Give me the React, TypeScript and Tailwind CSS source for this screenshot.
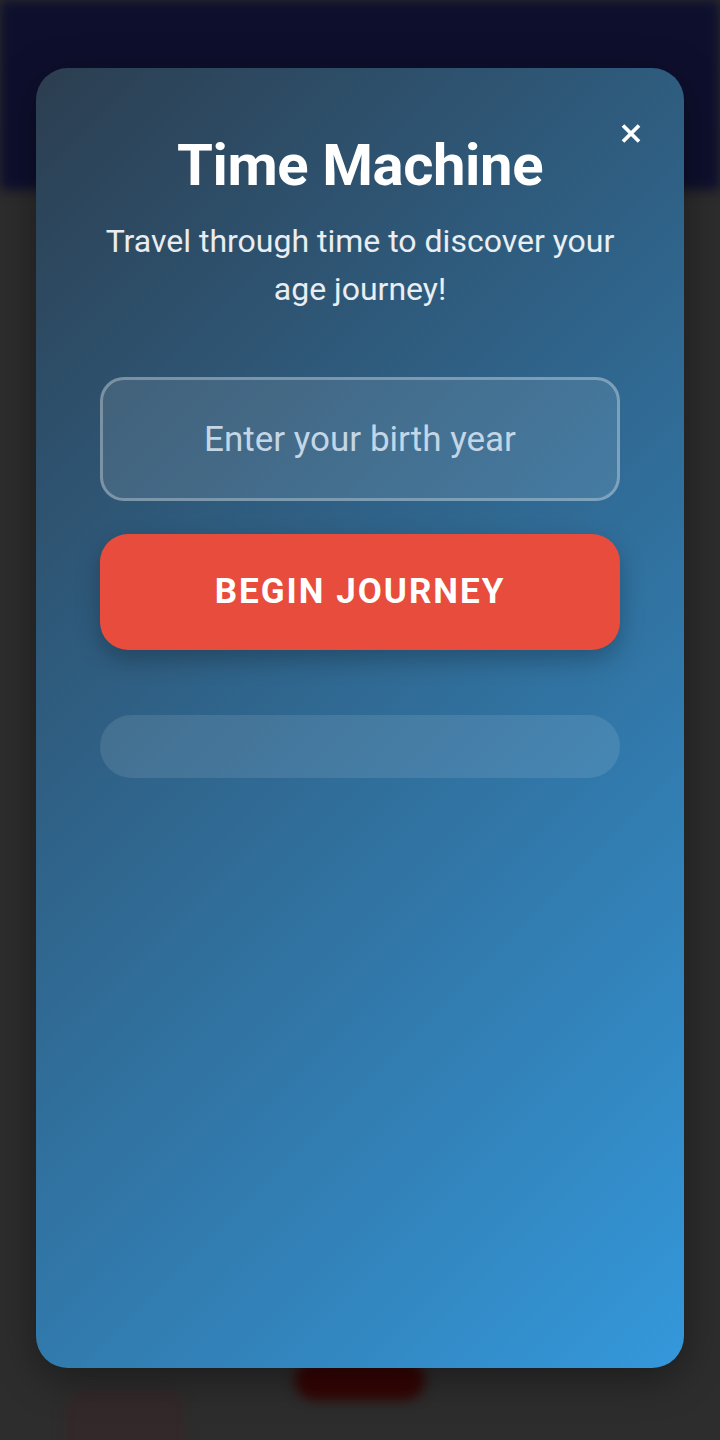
import { useState } from "react";

const App = () => {
  const [year, setYear] = useState("");

  return (
    <div className="relative w-full h-[1440px] overflow-hidden bg-[#2d2d2d] font-['Roboto',sans-serif]">
      {/* page behind the modal, blurred */}
      <div className="flex flex-col w-full h-full blur-[6px]">
        <div className="h-[190px] w-full bg-[#0e0f2d]" />
        <div className="flex-1 flex items-end justify-center gap-[110px] pb-[10px]">
          <div className="w-[120px] h-[80px] rounded-[20px] bg-[#33282a] -mb-[40px]" />
          <div className="w-[130px] h-[40px] rounded-[20px] bg-[#340404] mb-[30px]" />
          <div className="w-[120px] h-[20px]" />
        </div>
      </div>

      {/* modal overlay */}
      <div className="absolute inset-0 flex justify-center pt-[68px]">
        <div className="relative w-[648px] h-[1300px] rounded-[32px] bg-[linear-gradient(135deg,#2c3e50,#3498db)] shadow-[0_10px_40px_rgba(0,0,0,0.4)] px-[64px] pt-[62px] flex flex-col items-center text-white">
          <button className="absolute top-[55px] right-[43px] w-[20px] h-[21px] flex items-center justify-center">
            <svg viewBox="0 0 20 21" className="w-[20px] h-[21px]">
              <path d="M2 2.5 L18 18.5 M18 2.5 L2 18.5" stroke="#fff" strokeWidth="3.8" strokeLinecap="butt" />
            </svg>
          </button>

          <h1 className="text-[58px] leading-[70px] font-bold tracking-[-0.4px]">Time Machine</h1>
          <p className="mt-[17px] text-[32px] leading-[48px] text-center text-white/90">
            Travel through time to discover your age journey!
          </p>

          <input
            value={year}
            onChange={(e) => setYear(e.target.value)}
            placeholder="Enter your birth year"
            className="mt-[64px] w-full h-[124px] rounded-[24px] border-[3px] border-white/30 bg-white/10 text-center text-[35px] text-white placeholder:text-[#c3d6e6] outline-none"
          />

          <button className="mt-[33px] w-full h-[116px] rounded-[28px] bg-[#e74c3c] text-white text-[35px] font-bold tracking-[2px] shadow-[0_10px_25px_rgba(0,0,0,0.25)]">
            BEGIN JOURNEY
          </button>

          <div className="mt-[65px] w-full h-[63px] rounded-[32px] bg-white/10" />
        </div>
      </div>
    </div>
  );
};

export default App;
